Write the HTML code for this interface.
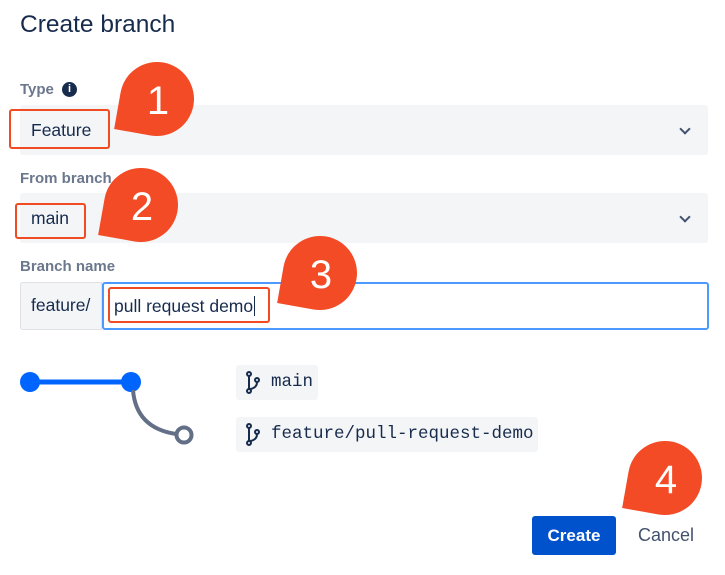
<!DOCTYPE html>
<html><head><style>
body{margin:0;width:725px;height:575px;background:#fff;font-family:"Liberation Sans",sans-serif;position:relative;overflow:hidden;color:#172b4d}
.a{position:absolute}
.lbl{font-size:15px;font-weight:bold;color:#6b778c}
.sel{background:#f4f5f7;border-radius:3px;left:20px;width:688px}
.red{border:2px solid #f04b23;border-radius:3px;box-sizing:border-box}
.drop{width:74px;height:74px;background:#f24b26;border-radius:50% 50% 50% 0;transform:rotate(10deg)}
.num{color:#fff;font-size:40px;width:74px;text-align:center;line-height:74px}
.tag{background:#f4f5f7;border-radius:3px;font-family:"Liberation Mono",monospace;font-size:17.5px;height:35px;line-height:35px;padding-left:35px;box-sizing:border-box}
.chev{width:6px;height:6px;border-right:2px solid #42526e;border-bottom:2px solid #42526e;transform:rotate(45deg)}
.t{font-size:17.5px}
</style></head><body>
<div class="a" style="left:20px;top:11px;font-size:24.5px;">Create branch</div>
<div class="a lbl" style="left:20px;top:81px">Type</div>
<div class="a" style="left:62px;top:82px;width:15px;height:15px;border-radius:50%;background:#172b4d;color:#fff;font-size:11px;font-weight:bold;text-align:center;line-height:15px">i</div>
<div class="a sel" style="top:105px;height:50px"></div>
<div class="a t" style="left:31px;top:120px">Feature</div>
<div class="a chev" style="left:681px;top:125px"></div>
<div class="a red" style="left:9px;top:109px;width:101px;height:40px"></div>
<div class="a lbl" style="left:20px;top:170px">From branch</div>
<div class="a sel" style="top:193px;height:50px"></div>
<div class="a t" style="left:31px;top:208px">main</div>
<div class="a chev" style="left:681px;top:213px"></div>
<div class="a red" style="left:15px;top:203px;width:71px;height:36px"></div>
<div class="a lbl" style="left:20px;top:258px">Branch name</div>
<div class="a" style="left:20px;top:282px;width:82px;height:48px;background:#f4f5f7;border:1px solid #dfe1e6;box-sizing:border-box;border-radius:3px 0 0 3px"></div>
<div class="a t" style="left:31px;top:295px">feature/</div>
<div class="a" style="left:102px;top:282px;width:607px;height:48px;border:2px solid #4c9aff;box-sizing:border-box;border-radius:3px"></div>
<div class="a t" style="left:114px;top:296px">pull request demo<span style="border-left:1px solid #172b4d;margin-left:1px"></span></div>
<div class="a red" style="left:108px;top:287px;width:162px;height:36px"></div>
<svg class="a" style="left:0;top:360px" width="220" height="100">
<line x1="30" y1="22" x2="130" y2="22" stroke="#0065ff" stroke-width="5"/>
<circle cx="30" cy="22" r="10" fill="#0065ff"/><circle cx="131" cy="22" r="10" fill="#0065ff"/>
<path d="M133 30 Q136 68 176 74" fill="none" stroke="#626f86" stroke-width="4"/>
<circle cx="184" cy="75" r="7.5" fill="#fff" stroke="#626f86" stroke-width="4"/>
</svg>
<div class="a tag" style="left:236px;top:365px;width:82px">main</div>
<div class="a tag" style="left:236px;top:417px;width:302px">feature/pull-request-demo</div>
<svg class="a" style="left:244px;top:370px" width="20" height="26"><g fill="none" stroke="#172b4d" stroke-width="2"><line x1="5" y1="5" x2="5" y2="19"/><circle cx="5" cy="4" r="2"/><circle cx="5" cy="21" r="2"/><circle cx="13" cy="10" r="2"/><path d="M13 12 Q13 18 6 19"/></g></svg>
<svg class="a" style="left:244px;top:422px" width="20" height="26"><g fill="none" stroke="#172b4d" stroke-width="2"><line x1="5" y1="5" x2="5" y2="19"/><circle cx="5" cy="4" r="2"/><circle cx="5" cy="21" r="2"/><circle cx="13" cy="10" r="2"/><path d="M13 12 Q13 18 6 19"/></g></svg>
<div class="a" style="left:532px;top:516px;width:84px;height:39px;background:#0052cc;border-radius:3px;color:#fff;font-size:17px;font-weight:bold;text-align:center;line-height:39px">Create</div>
<div class="a" style="left:638px;top:525px;font-size:18px;color:#42526e">Cancel</div>
<div class="a drop" style="left:120px;top:62px"></div><div class="a num" style="left:121px;top:64px">1</div>
<div class="a drop" style="left:104px;top:168px"></div><div class="a num" style="left:105px;top:170px">2</div>
<div class="a drop" style="left:283px;top:236px"></div><div class="a num" style="left:284px;top:238px">3</div>
<div class="a drop" style="left:628px;top:441px"></div><div class="a num" style="left:629px;top:443px">4</div>
</body></html>
